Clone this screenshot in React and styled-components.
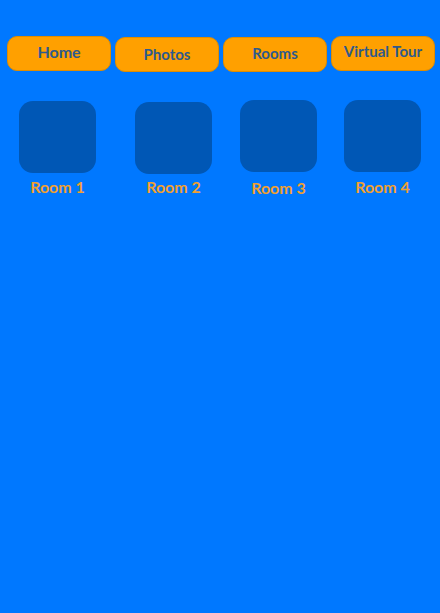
import React from "react";
import styled, { createGlobalStyle } from "styled-components";

const GlobalStyle = createGlobalStyle`
  html, body {
    margin: 0;
    padding: 0;
    background: #0078ff;
    font-family: Lato, "Open Sans", sans-serif;
  }
`;

const Page = styled.div`
  width: 440px;
  min-height: 613px;
  background: #0078ff;
  padding-top: 36px;
  box-sizing: border-box;
`;

const NavBar = styled.nav`
  display: grid;
  grid-template-columns: repeat(4, 104px);
  column-gap: 4px;
  padding: 0 7px;
`;

const NavButton = styled.button`
  height: 35px;
  margin-top: ${(p) => p.$offset || 0}px;
  border: 1px solid #e08c00;
  border-radius: 10px;
  background: #ffa000;
  color: #2e5a8c;
  font-family: Lato, "Open Sans", sans-serif;
  font-weight: 700;
  font-size: ${(p) => p.$size || 15}px;
  padding: 0 0 ${(p) => p.$lift || 3}px;
  cursor: pointer;
`;

const RoomGrid = styled.div`
  display: grid;
  grid-template-columns: repeat(4, 104px);
  column-gap: 4px;
  padding: 0 7px;
  margin-top: 28px;
`;

const Room = styled.div`
  display: flex;
  flex-direction: column;
  align-items: center;
  margin-top: ${(p) => p.$offset || 0}px;
  margin-left: ${(p) => p.$shift || 0}px;
`;

const Tile = styled.div`
  width: 77px;
  height: 72px;
  border-radius: 14px;
  background: #0057b5;
`;

const RoomLabel = styled.span`
  margin-top: ${(p) => p.$gap || 4}px;
  color: #f0a030;
  font-weight: 700;
  font-size: 16px;
`;

const navItems = [
  { label: "Home", size: 16, offset: 0, lift: 4 },
  { label: "Photos", size: 15, offset: 1, lift: 2 },
  { label: "Rooms", size: 15, offset: 1, lift: 3 },
  { label: "Virtual Tour", size: 15, offset: 0, lift: 5 },
];

const rooms = [
  { name: "Room 1", offset: 1, shift: -3, gap: 4 },
  { name: "Room 2", offset: 2, shift: 13, gap: 3 },
  { name: "Room 3", offset: 0, shift: 7, gap: 6 },
  { name: "Room 4", offset: 0, shift: -1, gap: 5 },
];

export default function App() {
  return (
    <Page>
      <GlobalStyle />
      <NavBar>
        {navItems.map((item) => (
          <NavButton
            key={item.label}
            $size={item.size}
            $offset={item.offset}
            $lift={item.lift}
          >
            {item.label}
          </NavButton>
        ))}
      </NavBar>
      <RoomGrid>
        {rooms.map((room) => (
          <Room key={room.name} $offset={room.offset} $shift={room.shift}>
            <Tile />
            <RoomLabel $gap={room.gap}>{room.name}</RoomLabel>
          </Room>
        ))}
      </RoomGrid>
    </Page>
  );
}
